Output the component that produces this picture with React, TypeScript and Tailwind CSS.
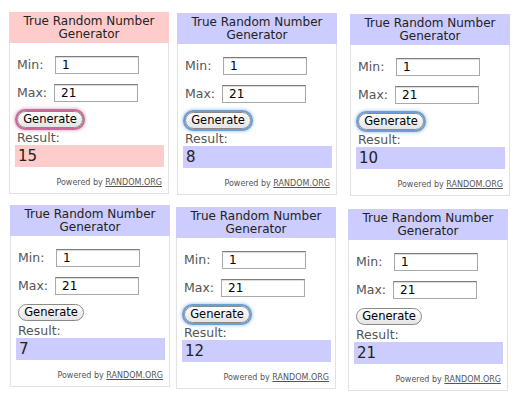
import React from "react";

type Tone = "pink" | "blue";
type Ring = "pink" | "blue" | "none";

const headerBg: Record<Tone, string> = {
  pink: "bg-[#ffcccc]",
  blue: "bg-[#ccccff]",
};

const ringCls: Record<Ring, string> = {
  pink: "shadow-[0_0_0_2px_#c86a9a,0_0_3px_3px_rgba(200,106,154,0.45)]",
  blue: "shadow-[0_0_0_2px_#6f9fd2,0_0_3px_3px_rgba(111,159,210,0.45)]",
  none: "",
};

function Field({ label, value, inputMl }: { label: string; value: string; inputMl: string }) {
  return (
    <div className="flex h-[18px] items-center">
      <span className="w-[37px] text-[12.5px] text-[#555]">{label}</span>
      <div
        className={`flex h-[18px] w-[84px] items-center border border-[#a9a9a9] border-t-[#7d7d7d] bg-white pl-[6px] text-[12px] text-black shadow-[inset_0_1px_1px_rgba(0,0,0,0.15)] ${inputMl}`}
      >
        {value}
      </div>
    </div>
  );
}

function Widget({
  tone,
  ring,
  result,
  className,
}: {
  tone: Tone;
  ring: Ring;
  result: string;
  className: string;
}) {
  return (
    <div className={`flex w-[160px] flex-col ${className}`}>
      <div
        className={`flex h-[31px] flex-col items-center justify-center text-[12px] leading-[13px] text-[#222] ${headerBg[tone]}`}
      >
        <span>True Random Number</span>
        <span>Generator</span>
      </div>
      <div className="flex h-[151px] flex-col border-x border-b border-[#e2e2e2] pl-[7px]">
        <div className="mt-[13px]">
          <Field label="Min:" value="1" inputMl="ml-px" />
        </div>
        <div className="mt-[10px]">
          <Field label="Max:" value="21" inputMl="" />
        </div>
        <div className="mt-[9px] flex">
          <div
            className={`flex h-[17px] w-[66px] items-center justify-center rounded-full border border-[#8a8a8a] bg-gradient-to-b from-white to-[#e4e4e4] text-[11.5px] text-black ${ringCls[ring]}`}
          >
            Generate
          </div>
        </div>
        <div className="mt-[3px] h-[14px] text-[12.5px] leading-[14px] text-[#555]">Result:</div>
        <div
          className={`-ml-[2px] flex h-[22px] w-[149px] items-center pl-[3px] text-[15px] text-[#222] ${headerBg[tone]}`}
        >
          {result}
        </div>
        <div className="mt-[10px] pr-[6px] text-right text-[8px] text-[#555]">
          Powered by <span className="underline">RANDOM.ORG</span>
        </div>
      </div>
    </div>
  );
}

export default function App() {
  return (
    <div
      className="h-[403px] w-[525px] overflow-hidden bg-white"
      style={{ fontFamily: '"DejaVu Sans", Verdana, sans-serif' }}
    >
      <div className="flex h-[196px] items-start">
        <Widget tone="pink" ring="pink" result="15" className="ml-[9px] mt-[12px]" />
        <Widget tone="blue" ring="blue" result="8" className="ml-[8px] mt-[13px]" />
        <Widget tone="blue" ring="blue" result="10" className="ml-[13px] mt-[14px]" />
      </div>
      <div className="flex items-start">
        <Widget tone="blue" ring="none" result="7" className="ml-[10px] mt-[9px]" />
        <Widget tone="blue" ring="blue" result="12" className="ml-[6px] mt-[11px]" />
        <Widget tone="blue" ring="none" result="21" className="ml-[12px] mt-[13px]" />
      </div>
    </div>
  );
}
